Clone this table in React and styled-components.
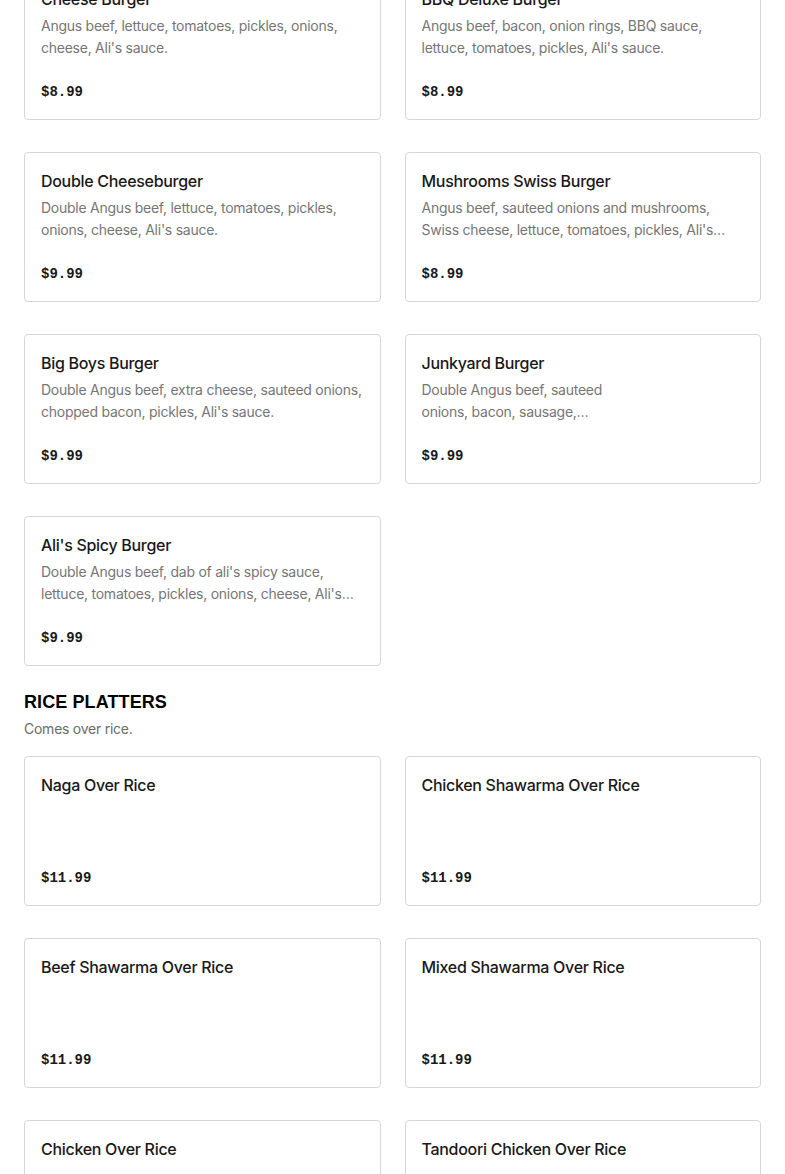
import React from "react";
import styled, { createGlobalStyle } from "styled-components";

const GlobalStyle = createGlobalStyle`
  body {
    margin: 0;
    background: #ffffff;
    font-family: Inter, "Noto Sans", sans-serif;
    overflow: hidden;
  }
`;

const Page = styled.div`
  padding: 0 24px;
  margin-top: -30px;
`;

const Section = styled.section`
  margin-bottom: 24px;
`;

const SectionTitle = styled.h2`
  margin: 0;
  font-family: "Liberation Sans", Arial, sans-serif;
  font-weight: 900;
  font-size: 18px;
  line-height: 24px;
  letter-spacing: 0.1px;
  color: #000;
  text-transform: uppercase;
`;

const SectionNote = styled.p`
  margin: 5px 0 17px;
  font-size: 14px;
  line-height: 20px;
  letter-spacing: -0.25px;
  color: #6b6b6b;
`;

const Grid = styled.div`
  display: grid;
  grid-template-columns: 1fr 1fr;
  column-gap: 24px;
  row-gap: 32px;
`;

const Card = styled.div`
  display: flex;
  flex-direction: column;
  height: 150px;
  box-sizing: border-box;
  padding: 16px;
  border: 1px solid #d6d6d6;
  border-radius: 4px;
  background: #fff;
`;

const ItemName = styled.div`
  font-size: 16px;
  font-weight: 500;
  line-height: 24px;
  letter-spacing: -0.3px;
  color: #191919;
  margin-bottom: 4px;
`;

const ItemDesc = styled.div`
  font-size: 14px;
  line-height: 22px;
  letter-spacing: -0.25px;
  color: #767676;
  max-width: ${(p) => (p.$narrow ? "200px" : "none")};
  display: -webkit-box;
  -webkit-line-clamp: 2;
  -webkit-box-orient: vertical;
  overflow: hidden;
  min-height: 44px;
`;

const Price = styled.div`
  margin-top: auto;
  font-family: "Liberation Mono", "DejaVu Sans Mono", monospace;
  font-weight: 700;
  font-size: 14px;
  line-height: 22px;
  color: #191919;
`;

const burgers = [
  { name: "Cheese Burger", desc: "Angus beef, lettuce, tomatoes, pickles, onions, cheese, Ali's sauce.", price: "$8.99" },
  { name: "BBQ Deluxe Burger", desc: "Angus beef, bacon, onion rings, BBQ sauce, lettuce, tomatoes, pickles, Ali's sauce.", price: "$8.99" },
  { name: "Double Cheeseburger", desc: "Double Angus beef, lettuce, tomatoes, pickles, onions, cheese, Ali's sauce.", price: "$9.99" },
  { name: "Mushrooms Swiss Burger", desc: "Angus beef, sauteed onions and mushrooms, Swiss cheese, lettuce, tomatoes, pickles, Ali's sauce.", price: "$8.99" },
  { name: "Big Boys Burger", desc: "Double Angus beef, extra cheese, sauteed onions, chopped bacon, pickles, Ali's sauce.", price: "$9.99" },
  { name: "Junkyard Burger", desc: "Double Angus beef, sauteed onions, bacon, sausage, pastrami, cheese, Ali's sauce.", price: "$9.99", narrow: true },
  { name: "Ali's Spicy Burger", desc: "Double Angus beef, dab of ali's spicy sauce, lettuce, tomatoes, pickles, onions, cheese, Ali's sauce.", price: "$9.99" },
];

const platters = [
  { name: "Naga Over Rice", price: "$11.99" },
  { name: "Chicken Shawarma Over Rice", price: "$11.99" },
  { name: "Beef Shawarma Over Rice", price: "$11.99" },
  { name: "Mixed Shawarma Over Rice", price: "$11.99" },
  { name: "Chicken Over Rice", price: "$11.99" },
  { name: "Tandoori Chicken Over Rice", price: "$11.99" },
];

const MenuCard = ({ item }) => (
  <Card>
    <ItemName>{item.name}</ItemName>
    <ItemDesc $narrow={item.narrow}>{item.desc}</ItemDesc>
    <Price>{item.price}</Price>
  </Card>
);

export default function App() {
  return (
    <>
      <GlobalStyle />
      <Page>
        <Section>
          <Grid>
            {burgers.map((b) => (
              <MenuCard key={b.name} item={b} />
            ))}
          </Grid>
        </Section>
        <Section>
          <SectionTitle>Rice Platters</SectionTitle>
          <SectionNote>Comes over rice.</SectionNote>
          <Grid>
            {platters.map((p) => (
              <MenuCard key={p.name} item={p} />
            ))}
          </Grid>
        </Section>
      </Page>
    </>
  );
}
